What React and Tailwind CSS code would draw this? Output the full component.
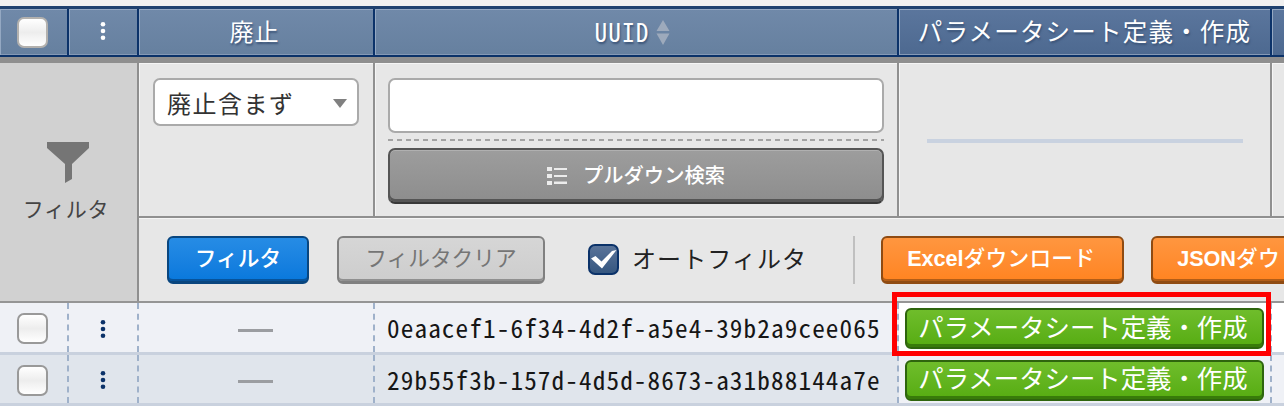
import React from "react";

const CELL = "flex shrink-0 items-center justify-center";
const JP = "font-['Liberation_Sans','Noto_Sans_CJK_JP',sans-serif]";
const MONO = "font-['Noto_Sans_CJK_JP',sans-serif] [font-feature-settings:'hwid'] whitespace-nowrap";

function Dots({ className }) {
  return (
    <svg width="6" height="20" viewBox="0 0 6 20" className={className} fill="currentColor">
      <circle cx="3" cy="3.2" r="2.3" />
      <circle cx="3" cy="10" r="2.3" />
      <circle cx="3" cy="16.8" r="2.3" />
    </svg>
  );
}

function Box({ className = "border-[#999]" }) {
  return (
    <span className={`block h-[31px] w-[31px] shrink-0 rounded-[7px] border-2 bg-linear-to-b from-white via-[#ededed] to-white ${className}`} />
  );
}

function HeadCell({ className = "", children }) {
  return (
    <div
      className={`${CELL} h-[46px] border-r-2 border-[#0b3269] text-white shadow-[inset_1px_1px_0_#94a8c2,inset_0_-1px_0_#8599b5] [text-shadow:1px_2px_2px_#3b5478] ${className}`}
    >
      {children}
    </div>
  );
}

const SOFT = "bg-linear-to-b from-[#7089a9] to-[#66809f]";
const DEEP = "bg-linear-to-b from-[#5b769d] to-[#4d6990]";

function OrangeButton({ className, latin, kana }) {
  return (
    <button
      className={`flex h-[48px] shrink-0 items-center whitespace-nowrap rounded-[6px] border-2 border-b-[3px] border-[#8f4b12] bg-linear-to-b from-[#ff963f] to-[#ff8420] text-[21.7px] font-bold leading-none text-white shadow-[inset_0_-2px_0_#b25d17] ${className}`}
    >
      <span className="tracking-[-0.1px]">{latin}</span>
      <span className="font-medium tracking-[0.3px]">{kana}</span>
    </button>
  );
}

function Row({ uuid, bg, actionBg, endBg, height }) {
  const dash = "h-full border-r-2 border-dashed border-[#9fb1ca]";
  return (
    <div className={`flex shrink-0 border-b-[3px] border-[#c9d1de] ${bg} ${height}`}>
      <div className={`${CELL} ${dash} w-[69px] pr-[2px] pt-[2px]`}><Box /></div>
      <div className={`${CELL} ${dash} w-[70px] pr-[1px] pt-[2px] text-[#0b3269]`}><Dots /></div>
      <div className={`${CELL} ${dash} w-[236px] pr-[1px]`}>
        <span className="mt-[5px] h-[3px] w-[35px] bg-[#9b9da1]" />
      </div>
      <div className={`${CELL} ${dash} w-[524px] justify-start pl-[12px] pt-[1px]`}>
        <span className={`${MONO} text-[25.2px] leading-none tracking-[1.12px] text-[#161616]`}>{uuid}</span>
      </div>
      <div className={`${CELL} ${dash} w-[373px] pt-[2px] ${actionBg}`}>
        <button className="flex h-[41px] w-[359px] items-center justify-center whitespace-nowrap rounded-[6px] border-2 border-[#2e650d] bg-linear-to-b from-[#6fbd2b] to-[#56ac10] pr-[3px] text-[25.4px] leading-none text-white shadow-[inset_0_-3px_0_#387b0a]">
          パラメータシート定義・作成
        </button>
      </div>
      <div className={`h-full w-[12px] shrink-0 ${endBg}`} />
    </div>
  );
}

export default function App() {
  return (
    <div className={`relative flex h-[406px] w-[1284px] flex-col overflow-hidden bg-[#f0f0f0] ${JP}`}>
      <div className="mt-[6px] flex h-[51px] shrink-0 border-b-2 border-t-[3px] border-[#0b3269] border-t-[#1e416f]">
        <HeadCell className={`w-[69px] pr-[2px] pt-[1px] ${SOFT}`}><Box className="border-[#b3b1ae]" /></HeadCell>
        <HeadCell className={`w-[70px] pb-[3px] pr-[1px] ${SOFT}`}><Dots /></HeadCell>
        <HeadCell className={`w-[236px] pr-[3px] pt-[2px] ${SOFT}`}>
          <span className="text-[24px] leading-none tracking-[1px]">廃止</span>
        </HeadCell>
        <HeadCell className={`w-[524px] pr-[7px] ${SOFT}`}>
          <span className={`${MONO} text-[25.2px] leading-none tracking-[1.12px]`}>UUID</span>
          <svg width="14" height="26" viewBox="0 0 14 26" className="ml-[7px]" fill="#9daabc">
            <path d="M7 1L13.5 12H.5zM7 26L.5 14.5h13z" />
          </svg>
        </HeadCell>
        <HeadCell className={`w-[373px] pt-[2px] ${DEEP}`}>
          <span className="whitespace-nowrap text-[24.5px] leading-none tracking-[1.2px]">パラメータシート定義・作成</span>
        </HeadCell>
        <div className={`h-full w-[12px] shrink-0 shadow-[inset_1px_1px_0_#94a8c2] ${DEEP}`} />
      </div>
      <div className="h-[6px] shrink-0 bg-[#8f8f8f]" />

      <div className="flex h-[240px] shrink-0 border-b-2 border-[#959595]">
        <div className="flex w-[139px] shrink-0 flex-col items-center border-r-2 border-[#8f8f8f] bg-[#d1d1d1] pt-[79px]">
          <svg width="44" height="42" viewBox="0 0 44 42" className="mr-[1px]" fill="#757575">
            <path d="M1 0h42v6L26 22v15l-7 4V22L1 6z" />
          </svg>
          <span className="mt-[15px] pr-[5px] text-[21px] leading-none tracking-[0.7px] text-[#444]">フィルタ</span>
        </div>
        <div className="flex w-[1145px] shrink-0 flex-col bg-[#e7e7e7]">
          <div className="flex h-[155px] shrink-0 border-b-2 border-[#909090]">
            <div className="w-[236px] shrink-0 border-r-2 border-[#909090] pl-[14px] pt-[15px] shadow-[inset_1px_1px_0_#f5f5f5]">
              <div className="flex h-[48px] w-[206px] items-center justify-between rounded-[7px] border-2 border-[#aaa] bg-white pl-[12px] pr-[10px]">
                <span className="pt-[5px] text-[24px] leading-none tracking-[1.5px] text-[#333]">廃止含まず</span>
                <svg width="14" height="9" viewBox="0 0 14 9" className="mt-[3px]" fill="#808080"><path d="M0 0h14L7 9z" /></svg>
              </div>
            </div>
            <div className="w-[524px] shrink-0 border-r-2 border-[#909090] pl-[13px] pt-[15px] shadow-[inset_1px_1px_0_#f5f5f5]">
              <input className="block h-[55px] w-[496px] rounded-[7px] border-2 border-[#aaa] bg-white" />
              <div className="mt-[6px] h-[2px] w-[496px] bg-[repeating-linear-gradient(90deg,#a3a3a3_0_5px,transparent_5px_8.8px)]" />
              <button className="mt-[7px] flex h-[56px] w-[496px] items-center justify-center rounded-[7px] border-2 border-[#555] border-b-[#383838] bg-linear-to-b from-[#9d9d9d] to-[#8d8d8d] pb-[1px] text-white shadow-[inset_0_1px_0_#b0b0b0,inset_0_-3px_0_#555]">
                <svg width="21" height="20" viewBox="0 0 21 20" className="mr-[15px]" fill="#ececec">
                  <path d="M0 1h5v4H0zM0 8h5v4H0zM0 15h5v4H0zM7 2h13v2H7zM7 9h13v2H7zM7 15.5h13v2.5H7z" />
                </svg>
                <span className="pt-[2px] text-[20.3px] font-medium leading-none">プルダウン検索</span>
              </button>
            </div>
            <div className="w-[373px] shrink-0 border-r-2 border-[#909090] pl-[28px] pt-[76px] shadow-[inset_1px_1px_0_#f5f5f5]">
              <div className="h-[4px] w-[316px] bg-[#c9d2e0]" />
            </div>
            <div className="w-[12px] shrink-0 shadow-[inset_1px_1px_0_#f5f5f5]" />
          </div>
          <div className="flex h-[83px] w-full items-center overflow-hidden pl-[28px] shadow-[inset_0_1px_0_#f5f5f5]">
            <button className="flex h-[48px] w-[142px] shrink-0 items-center justify-center rounded-[6px] border-2 border-b-[3px] border-[#09467f] bg-linear-to-b from-[#268ce5] to-[#0878dc] text-[21.7px] font-medium leading-none text-white shadow-[inset_0_-2px_0_#07539b]">フィルタ</button>
            <button className="ml-[28px] flex h-[48px] w-[208px] shrink-0 items-center justify-center rounded-[6px] border-2 border-b-[3px] border-[#808080] bg-linear-to-b from-[#d6d6d6] to-[#cdcdcd] text-[21.7px] leading-none text-[#757575] shadow-[inset_0_-2px_0_#909090]">フィルタクリア</button>
            <span className="ml-[43px] flex h-[31px] w-[31px] shrink-0 items-center justify-center rounded-[7px] border-2 border-[#0b3269] bg-linear-to-b from-[#597399] to-[#365780]">
              <svg width="27" height="21" viewBox="0 0 27 21" className="shrink-0" fill="#fff"><path d="M1 9.5l4.500-2.500 6 5.500L22 2l4.500-1L12 19.500z" /></svg>
            </span>
            <span className="ml-[13px] shrink-0 whitespace-nowrap text-[24px] leading-none tracking-[1.1px] text-[#222]">オートフィルタ</span>
            <span className="ml-[46px] h-[48px] w-[2px] shrink-0 bg-[#c0c0c0]" />
            <OrangeButton className="ml-[26px] w-[243px] pl-[24px]" latin="Excel" kana="ダウンロード" />
            <OrangeButton className="ml-[27px] w-[243px] pl-[24px]" latin="JSON" kana="ダウ" />
          </div>
        </div>
      </div>

      <Row uuid="0eaacef1-6f34-4d2f-a5e4-39b2a9cee065" bg="bg-[#eff1f6]" actionBg="bg-white" endBg="bg-white" height="h-[52px]" />
      <Row uuid="29b55f3b-157d-4d5d-8673-a31b88144a7e" bg="bg-[#e0e5ec]" actionBg="bg-[#eff1f6]" endBg="bg-[#eff1f6]" height="h-[51px]" />

      <div className="pointer-events-none absolute left-[892px] top-[292px] h-[64px] w-[379px] border-[5px] border-[#ff0000]" />
    </div>
  );
}
